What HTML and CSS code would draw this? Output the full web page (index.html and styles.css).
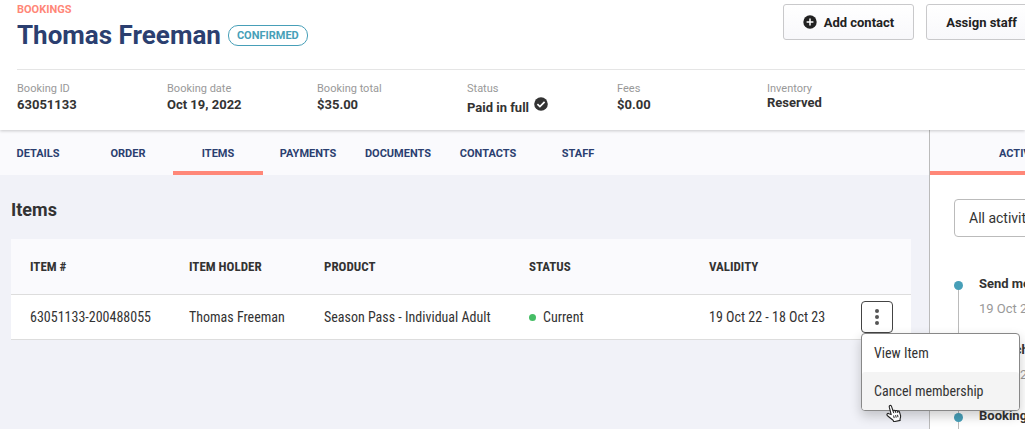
FILE: index.html
```html
<!DOCTYPE html>
<html lang="en">
<head>
  <meta charset="UTF-8">
  <meta name="viewport" content="width=device-width, initial-scale=1.0">
  <title>Booking - Thomas Freeman</title>
  <link rel="stylesheet" href="styles.css">
</head>
<body>

  <header class="header">
    <div class="header-top">
      <div class="title-block">
        <a class="breadcrumb" href="#">BOOKINGS</a>
        <div class="title-row">
          <h1>Thomas Freeman</h1>
          <span class="badge">CONFIRMED</span>
        </div>
      </div>
      <div class="actions">
        <button class="btn" type="button">
          <svg width="14" height="14" viewBox="0 0 14 14" aria-hidden="true">
            <circle cx="7" cy="7" r="6.7" fill="#222"/>
            <path d="M7 3.6v6.8M3.6 7h6.8" stroke="#fff" stroke-width="1.5"/>
          </svg>
          Add contact
        </button>
        <button class="btn" type="button">Assign staff</button>
      </div>
    </div>

    <dl class="summary">
      <div><dt>Booking ID</dt><dd>63051133</dd></div>
      <div><dt>Booking date</dt><dd>Oct 19, 2022</dd></div>
      <div><dt>Booking total</dt><dd>$35.00</dd></div>
      <div>
        <dt>Status</dt>
        <dd class="paid">Paid in full
          <svg width="14" height="14" viewBox="0 0 14 14" aria-hidden="true">
            <circle cx="7" cy="7" r="6.8" fill="#333"/>
            <path d="M3.4 7.2l2.5 2.4 4.7-4.8" fill="none" stroke="#fff" stroke-width="1.7"/>
          </svg>
        </dd>
      </div>
      <div><dt>Fees</dt><dd>$0.00</dd></div>
      <div><dt>Inventory</dt><dd class="tight">Reserved</dd></div>
    </dl>
  </header>

  <div class="page">
    <main class="main">
      <nav class="tabs">
        <a href="#">DETAILS</a>
        <a href="#">ORDER</a>
        <a href="#" class="active">ITEMS</a>
        <a href="#">PAYMENTS</a>
        <a href="#">DOCUMENTS</a>
        <a href="#">CONTACTS</a>
        <a href="#">STAFF</a>
      </nav>

      <section class="items">
        <h2>Items</h2>
        <table>
          <colgroup>
            <col class="col-id">
            <col class="col-holder">
            <col class="col-product">
            <col class="col-status">
            <col class="col-validity">
            <col class="col-menu">
          </colgroup>
          <thead>
            <tr>
              <th>ITEM #</th>
              <th>ITEM HOLDER</th>
              <th>PRODUCT</th>
              <th>STATUS</th>
              <th>VALIDITY</th>
              <th></th>
            </tr>
          </thead>
          <tbody>
            <tr>
              <td>63051133-200488055</td>
              <td>Thomas Freeman</td>
              <td>Season Pass - Individual Adult</td>
              <td><span class="dot"></span>Current</td>
              <td>19 Oct 22 - 18 Oct 23</td>
              <td class="menu-cell">
                <div class="dropdown">
                  <button class="kebab" type="button" aria-label="Item actions">
                    <svg width="6" height="18" viewBox="0 0 6 18" aria-hidden="true">
                      <circle cx="3" cy="3" r="2"/>
                      <circle cx="3" cy="9" r="2"/>
                      <circle cx="3" cy="15" r="2"/>
                    </svg>
                  </button>
                  <div class="menu">
                    <button type="button">View Item</button>
                    <button type="button" class="hover">Cancel membership</button>
                    <svg class="pointer" width="16" height="18" viewBox="0 0 16 18" aria-hidden="true">
                      <path d="M5.2 10.6 3.3 3.2C2.9 1.4 4.9.7 5.5 2.4l1.5 4.3c.6-.8 1.8-.6 2.2.2.7-.7 1.8-.4 2.2.4 1-.5 2 .1 2.2 1l.9 3.1c.4 1.6-.2 2.8-.5 3.8l.2 1.2-6.4 1.3-.6-1.3C5.5 15 3.900 13.600 1.500 11.700.2 10.400 1.600 8.900 3 9.700z" fill="#fff" stroke="#222" stroke-width="1.1" stroke-linejoin="round"/>
                      <path d="M7 6.700l.8 2.500M9.200 6.900l.7 2M11.400 7.300l.5 1.700M7.600 11.500l.6 2.600M9.600 11.100l.6 2.600M11.500 10.800l.5 2.400" fill="none" stroke="#222"/>
                    </svg>
                  </div>
                </div>
              </td>
            </tr>
          </tbody>
        </table>
      </section>
    </main>

    <aside class="activity">
      <div class="activity-tab"><a href="#">ACTIVITY</a></div>
      <div class="activity-body">
        <button class="filter" type="button">All activity</button>
        <ul class="timeline">
          <li><strong>Send message</strong><span>19 Oct 2022</span></li>
          <li><strong>Email check-in</strong><span>19 Oct 2022</span></li>
          <li><strong>Booking confirmed</strong><span>19 Oct 2022</span></li>
        </ul>
      </div>
    </aside>
  </div>

</body>
</html>
```
FILE: styles.css
```css
* {
  margin: 0;
  padding: 0;
  box-sizing: border-box;
}

body {
  height: 100vh;
  display: flex;
  flex-direction: column;
  overflow: hidden;
  background: #f1f2f8;
  color: #333;
  font-family: Roboto, "Liberation Sans", sans-serif;
  font-size: 14px;
}

a {
  color: inherit;
  text-decoration: none;
}

button {
  font: inherit;
  color: inherit;
  cursor: pointer;
}

/* Header */
.header {
  position: relative;
  z-index: 2;
  flex: none;
  padding: 0 0 17px 17px;
  background: #fff;
  box-shadow: 0 1px 3px rgba(0,0,0,0.2);
}

.header-top {
  display: flex;
  justify-content: space-between;
  height: 70px;
  padding-top: 4px;
  border-bottom: 1px solid #e5e5e5;
}

.breadcrumb {
  display: block;
  color: #ff8778;
  font-size: 11px;
  font-weight: 700;
  line-height: 12px;
}

.title-row {
  display: flex;
  align-items: center;
  gap: 7px;
}

h1 {
  color: #2b3f70;
  font-size: 26px;
  font-weight: 700;
  line-height: 38px;
}

.badge {
  padding: 0 8px;
  border: 1px solid #479fb8;
  border-radius: 10px;
  color: #479fb8;
  font-size: 11px;
  font-weight: 700;
  line-height: 19px;
}

.actions {
  display: flex;
  gap: 12px;
  margin-right: -12px;
}

.btn {
  display: flex;
  align-items: center;
  gap: 7px;
  height: 36px;
  padding: 0 19px;
  border: 1px solid #c9c9cb;
  border-radius: 3px;
  background: linear-gradient(#fff, #f8f8fb);
  color: #222;
  font-size: 13px;
  font-weight: 700;
  white-space: nowrap;
}

.summary {
  display: flex;
  padding-top: 12px;
}

.summary div {
  flex: 0 0 150px;
  height: 31px;
}

dt {
  color: #999;
  font-size: 11px;
  line-height: 14px;
}

dd {
  font-size: 13px;
  font-weight: 700;
  line-height: 18px;
}

.paid {
  display: flex;
  gap: 5px;
  line-height: 24px;
}

.paid svg {
  margin-top: 1px;
}

.tight {
  line-height: 14px;
}

/* Content */
.page {
  flex: 1;
  display: flex;
  min-height: 0;
}

.main {
  position: relative;
  z-index: 1;
  flex: 1;
  min-width: 0;
}

.tabs {
  display: flex;
  height: 45px;
  background: #fafafd;
}

.tabs a {
  flex: 0 0 90px;
  border-bottom: 4px solid transparent;
  color: #2b3f70;
  font-size: 11px;
  font-weight: 700;
  line-height: 48px;
  text-align: center;
}

.tabs a:first-child {
  flex-basis: 83px;
  padding-right: 7px;
}

.tabs .active {
  border-color: #ff8778;
}

.items {
  padding: 24px 18px 0 11px;
}

h2 {
  margin-bottom: 18px;
  font-size: 18px;
  font-weight: 700;
  line-height: 22px;
}

table {
  width: 100%;
  border-collapse: collapse;
  table-layout: fixed;
  background: #fff;
  font-family: "Roboto Condensed", Roboto, sans-serif;
  font-size: 14px;
}

.col-id { width: 178px; }
.col-holder { width: 15%; }
.col-product { width: 205px; }
.col-status { width: 20%; }
.col-validity { width: 16%; }

th,
td {
  height: 45px;
  border-bottom: 1px solid #ddd;
  text-align: left;
  white-space: nowrap;
}

th {
  height: 55px;
  background: #fafafd;
  font-size: 13px;
  font-weight: 700;
}

th:first-child,
td:first-child {
  padding-left: 19px;
}

.dot {
  display: inline-block;
  width: 7px;
  height: 7px;
  margin-right: 7px;
  border-radius: 50%;
  background: #45bd65;
  vertical-align: 1px;
}

.menu-cell {
  padding-right: 18px;
}

.dropdown {
  position: relative;
  width: 32px;
  margin-left: auto;
}

.kebab {
  display: flex;
  align-items: center;
  justify-content: center;
  width: 32px;
  height: 32px;
  border: 1px solid #444;
  border-radius: 4px;
  background: #fff;
  fill: #555;
}

.menu {
  position: absolute;
  top: 32px;
  left: 0;
  width: 159px;
  border: 1px solid #888;
  border-radius: 4px;
  background: #fff;
  box-shadow: 0 5px 12px rgba(0,0,0,0.2);
}

.menu button {
  display: block;
  width: 100%;
  height: 38px;
  padding-left: 12px;
  border: none;
  border-radius: 3px;
  background: none;
  text-align: left;
}

.menu .hover {
  background: #f4f4f4;
}

.pointer {
  position: absolute;
  top: 70px;
  left: 24px;
}

/* Activity */
.activity {
  flex: 0 0 96px;
  overflow: hidden;
  border-left: 1px solid #bbb;
  background: #fff;
  white-space: nowrap;
}

.activity-tab {
  height: 45px;
  padding-left: 69px;
  border-bottom: 4px solid #ff8778;
  background: #fafafd;
  color: #2b3f70;
  font-size: 11px;
  font-weight: 700;
  line-height: 48px;
}

.activity-body {
  padding: 24px 0 0 24px;
}

.filter {
  width: 250px;
  height: 38px;
  padding-left: 14px;
  border: 1px solid #bbb;
  border-radius: 4px;
  background: #fff;
  text-align: left;
}

.timeline {
  margin-top: 38px;
  list-style: none;
}

.timeline li {
  position: relative;
  height: 66px;
  padding-left: 25px;
}

.timeline li::before {
  content: "";
  position: absolute;
  top: 10px;
  left: 4px;
  height: 66px;
  border-left: 1px solid #bbb;
}

.timeline li::after {
  content: "";
  position: absolute;
  top: 6px;
  left: 0;
  width: 9px;
  height: 9px;
  border-radius: 50%;
  background: #479fb8;
}

.timeline strong,
.timeline span {
  display: block;
  font-size: 13px;
  line-height: 18px;
}

.timeline span {
  margin-top: 7px;
  color: #999;
}
```
